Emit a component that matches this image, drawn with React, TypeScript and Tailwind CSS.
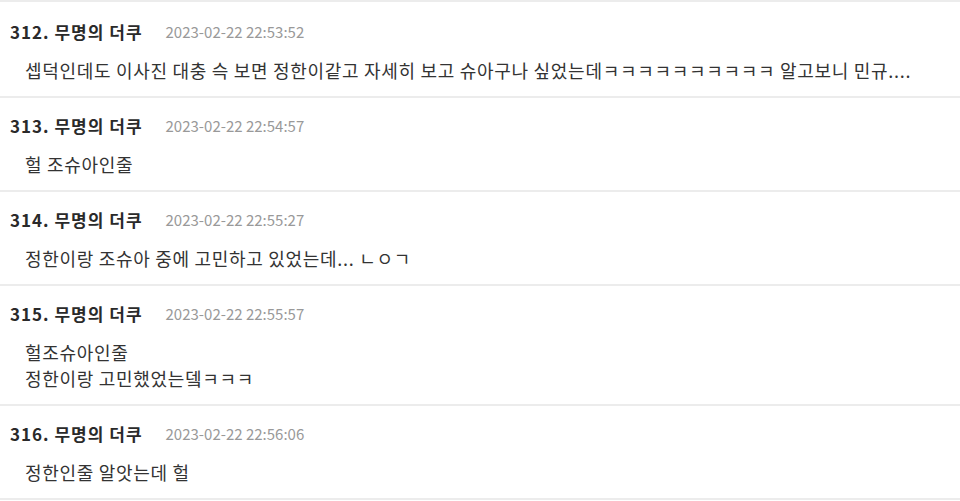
const comments = [
  {
    no: 312,
    date: "2023-02-22 22:53:52",
    lines: [
      "셉덕인데도 이사진 대충 슥 보면 정한이같고 자세히 보고 슈아구나 싶었는데ㅋㅋㅋㅋㅋㅋㅋㅋㅋㅋ 알고보니 민규....",
    ],
  },
  {
    no: 313,
    date: "2023-02-22 22:54:57",
    lines: ["헐 조슈아인줄"],
  },
  {
    no: 314,
    date: "2023-02-22 22:55:27",
    lines: ["정한이랑 조슈아 중에 고민하고 있었는데... ㄴㅇㄱ"],
  },
  {
    no: 315,
    date: "2023-02-22 22:55:57",
    lines: ["헐조슈아인줄", "정한이랑 고민했었는뎈ㅋㅋㅋ"],
  },
  {
    no: 316,
    date: "2023-02-22 22:56:06",
    lines: ["정한인줄 알앗는데 헐"],
  },
];

export default function App() {
  return (
    <main
      className="min-h-screen bg-white"
      style={{
        fontFamily:
          '"Noto Sans CJK KR", "Noto Sans", sans-serif',
      }}
    >
      {/* COMMENT LIST */}

      <ul className="border-t-2 border-[#ececec] pt-[2px]">
        {comments.map((c) => (
          <li
            key={c.no}
            className="border-b-2 border-[#ececec] pb-[13px] pt-[17px]"
          >
            <div className="flex h-[22px] items-center pl-[10px]">
              <span className="text-[17px] font-bold tracking-[1px] text-[#2a2a2a]">
                {c.no}. 무명의 더쿠
              </span>

              <span className="ml-[23px] text-[15px] text-[#999]">
                {c.date}
              </span>
            </div>

            <div className="mt-[14px] pl-[25px] text-[18px] leading-[26px] tracking-[0.7px] text-[#333]">
              {c.lines.map((line, i) => (
                <p key={i} className="whitespace-nowrap">
                  {line}
                </p>
              ))}
            </div>
          </li>
        ))}
      </ul>
    </main>
  );
}
